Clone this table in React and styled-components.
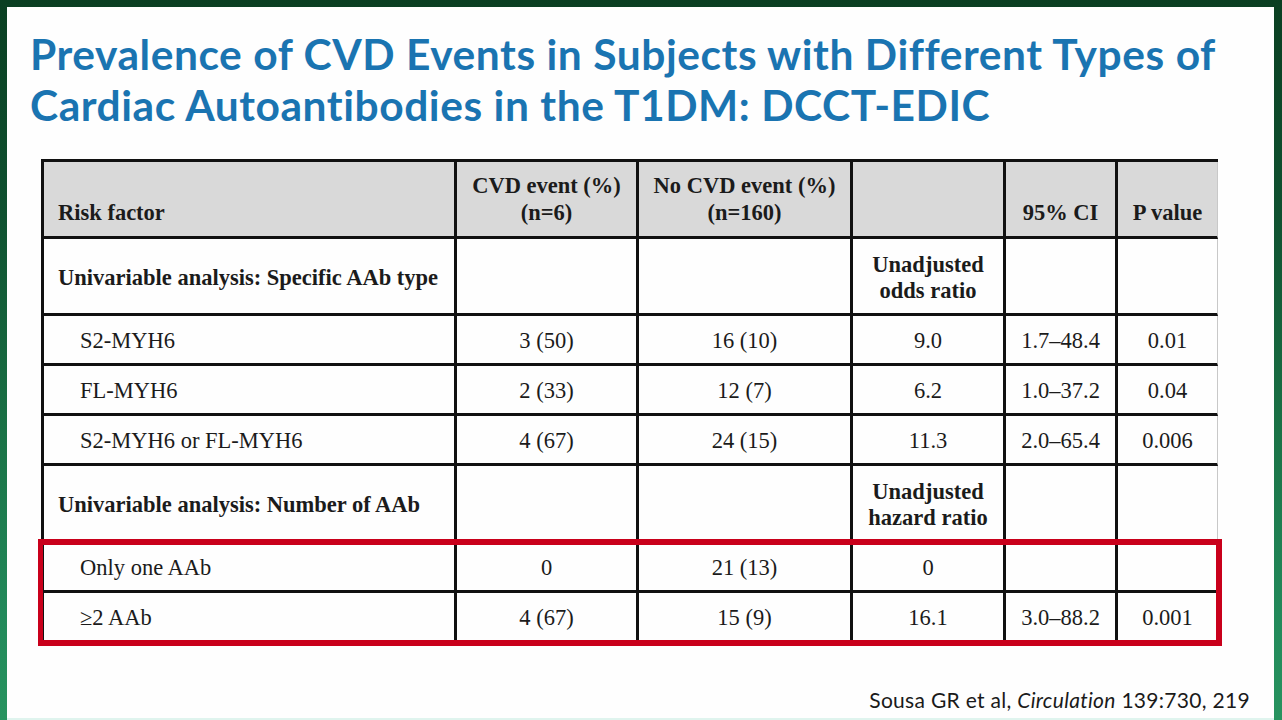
import React from 'react';
import styled, { createGlobalStyle } from 'styled-components';

const GlobalStyle = createGlobalStyle`
  html, body {
    margin: 0;
    padding: 0;
  }
  body {
    background: linear-gradient(180deg, #0a3f22 0%, #0f5130 30%, #1a7246 60%, #22895a 85%, #27935f 100%);
    font-family: "Liberation Serif", "Times New Roman", serif;
  }
`;

const Frame = styled.div`
  width: 1282px;
  height: 720px;
  box-sizing: border-box;
  padding: 7px 8px 0 7px;
  display: flex;
`;

const Slide = styled.div`
  flex: 1;
  background: #fefefe;
  border-bottom: 2px solid #dff4ee;
  display: flex;
  flex-direction: column;
`;

const Title = styled.h1`
  margin: 0;
  padding: 22px 0 0 23px;
  font-family: Lato, "Open Sans", sans-serif;
  font-weight: 700;
  font-size: 42.5px;
  line-height: 50.5px;
  letter-spacing: 0.55px;
  font-variant-ligatures: none;
  color: #1a74b1;
  white-space: nowrap;
`;

const TitleLine = styled.span`
  display: block;
`;

const TableWrap = styled.div`
  position: relative;
  margin: 29px 0 0 34px;
  width: 1177px;
`;

const Table = styled.table`
  width: 1177px;
  table-layout: fixed;
  border-collapse: separate;
  border-spacing: 0;
  border-top: 3px solid #111;
  border-left: 3px solid #111;
  color: #1b1b1b;
  font-size: 22.5px;
  line-height: 26.5px;
`;

const HeadRow = styled.tr`
  height: 77px;
  background: #d9d9d9;
`;

const Row = styled.tr`
  height: ${(p) => (p.$tall ? '77px' : '50px')};
`;

const Cell = styled.td`
  padding: ${(p) => (p.$head ? '0 4px 10px' : '4px 4px 0')};
  padding-left: ${(p) => (p.$indent ? '36px' : p.$left ? '14px' : '4px')};
  border-right: 3px solid #111;
  border-bottom: 3px solid #111;
  text-align: ${(p) => (p.$left ? 'left' : 'center')};
  vertical-align: ${(p) => (p.$head ? 'bottom' : 'middle')};
  font-weight: ${(p) => (p.$bold ? 700 : 400)};
  white-space: nowrap;

  &:last-child {
    border-right: 1px solid #c8c8c8;
  }
`;

const Highlight = styled.div`
  position: absolute;
  left: -3px;
  top: 380px;
  width: 1184px;
  height: 107px;
  box-sizing: border-box;
  border: 6px solid #c9001b;
  border-left-width: 5px;
  border-right-width: 6px;
  pointer-events: none;
`;

const Footer = styled.div`
  margin-top: auto;
  padding: 0 24px 6px 0;
  text-align: right;
  font-family: Lato, "Open Sans", sans-serif;
  font-size: 21px;
  line-height: 24px;
  letter-spacing: 0.3px;
  color: #1a1a1a;
`;

const widths = [413, 182, 214, 153, 112, 100];

const rows = [
  { label: 'S2-MYH6', cells: ['3 (50)', '16 (10)', '9.0', '1.7–48.4', '0.01'] },
  { label: 'FL-MYH6', cells: ['2 (33)', '12 (7)', '6.2', '1.0–37.2', '0.04'] },
  { label: 'S2-MYH6 or FL-MYH6', cells: ['4 (67)', '24 (15)', '11.3', '2.0–65.4', '0.006'] },
];

const countRows = [
  { label: 'Only one AAb', cells: ['0', '21 (13)', '0', '', ''] },
  { label: '≥2 AAb', cells: ['4 (67)', '15 (9)', '16.1', '3.0–88.2', '0.001'] },
];

function DataRow({ label, cells }) {
  return (
    <Row>
      <Cell $left $indent>{label}</Cell>
      {cells.map((c, i) => (
        <Cell key={i}>{c}</Cell>
      ))}
    </Row>
  );
}

function SectionRow({ label, ratio }) {
  return (
    <Row $tall>
      <Cell $left $bold>{label}</Cell>
      <Cell />
      <Cell />
      <Cell $bold>
        Unadjusted
        <br />
        {ratio}
      </Cell>
      <Cell />
      <Cell />
    </Row>
  );
}

export default function App() {
  return (
    <>
      <GlobalStyle />
      <Frame>
        <Slide>
          <Title>
            <TitleLine>Prevalence of CVD Events in Subjects with Different Types of</TitleLine>
            <TitleLine>Cardiac Autoantibodies in the T1DM: DCCT-EDIC</TitleLine>
          </Title>
          <TableWrap>
            <Table>
              <colgroup>
                {widths.map((w, i) => (
                  <col key={i} style={{ width: w }} />
                ))}
              </colgroup>
              <tbody>
                <HeadRow>
                  <Cell $head $left $bold>Risk factor</Cell>
                  <Cell $head $bold>
                    CVD event (%)
                    <br />
                    (n=6)
                  </Cell>
                  <Cell $head $bold>
                    No CVD event (%)
                    <br />
                    (n=160)
                  </Cell>
                  <Cell $head $bold />
                  <Cell $head $bold>95% CI</Cell>
                  <Cell $head $bold>P value</Cell>
                </HeadRow>
                <SectionRow label="Univariable analysis: Specific AAb type" ratio="odds ratio" />
                {rows.map((r) => (
                  <DataRow key={r.label} {...r} />
                ))}
                <SectionRow label="Univariable analysis: Number of AAb" ratio="hazard ratio" />
                {countRows.map((r) => (
                  <DataRow key={r.label} {...r} />
                ))}
              </tbody>
            </Table>
            <Highlight />
          </TableWrap>
          <Footer>
            Sousa GR et al, <i>Circulation</i> 139:730, 219
          </Footer>
        </Slide>
      </Frame>
    </>
  );
}
